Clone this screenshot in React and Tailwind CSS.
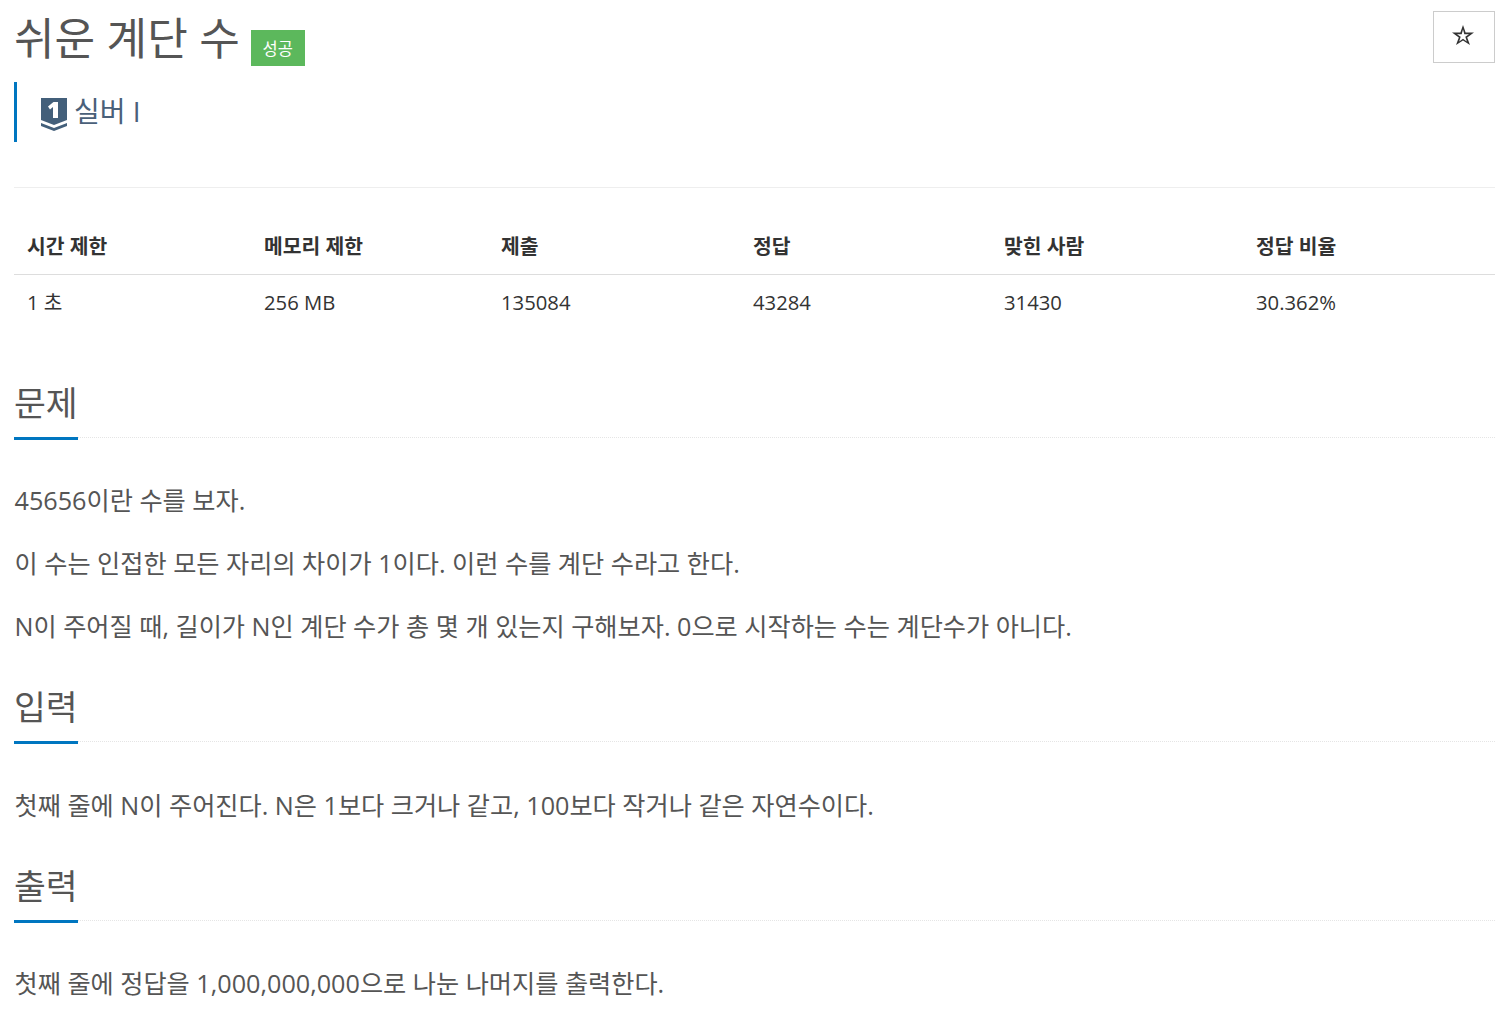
const font = { fontFamily: '"Open Sans", "Noto Sans CJK KR", sans-serif' };

function Section({ title, children }) {
  return (
    <section>
      <div className="border-b border-dotted border-[#e5e5e5] h-[66px] flex">
        <h2 className="h-[68px] border-b-[3px] border-[#0076c0] text-[34.65px] leading-[62px] text-[#555] font-normal">{title}</h2>
      </div>
      <div className="pt-[43px] pb-[32px] pl-[0.5px] text-[#555] text-[25.2px] leading-[38px]">{children}</div>
    </section>
  );
}

export default function App() {
  const headers = ["시간 제한", "메모리 제한", "제출", "정답", "맞힌 사람", "정답 비율"];
  const values = ["1 초", "256 MB", "135084", "43284", "31430", "30.362%"];
  const widths = ["w-[237px]", "w-[237px]", "w-[252px]", "w-[251px]", "w-[252px]", "w-[252px]"];

  return (
    <div className="pl-[14px] pr-[13px] w-[1508px] bg-white" style={font}>
      <div className="flex justify-between items-start h-[82px]">
        <h1 className="flex items-start text-[44.1px] leading-[76px] text-[#555] font-normal">
          쉬운 계단 수
          <span className="ml-[11px] mt-[30px] w-[54px] h-[36px] bg-[#5cb85c] text-white text-[16.5px] leading-[38px] text-center">성공</span>
        </h1>
        <button className="mt-[11px] w-[62px] h-[52px] border border-[#ccc] flex items-center justify-center pb-[4px] pr-[2px]">
          <svg width="22" height="20" viewBox="0 0 22 20">
            <path
              fillRule="evenodd"
              fill="#333"
              d="M11 0l2.6 7.5H22l-6.8 4.9L18 20l-7-4.5L4 20l2.8-7.6L0 7.5h8.4zM11 4.5L9.7 9.2H5l3.7 2.6-1.5 4.8 3.8-2.9 3.8 2.9-1.5-4.8L17 9.2h-4.7z"
            />
          </svg>
        </button>
      </div>

      <div className="h-[60px] border-l-[3px] border-[#0076c0] pl-[24px] flex items-start text-[#4a6079] text-[28px] leading-[58px]">
        <svg width="28" height="35" viewBox="0 0 28 35" className="mt-[15px] mr-[6px] -ml-[1px]">
          <path d="M1 1h26v22L14 28 1 23z" fill="#435f7a" />
          <path d="M1 26l13 5 13-5v3l-13 5-13-5z" fill="#435f7a" />
          <path d="M8 9.5l5.5-4.5H18v16h-5V10l-3 2.5z" fill="#fff" />
        </svg>
        실버 I
      </div>

      <div className="mt-[45px] border-t border-[#eee]">
        <div className="flex h-[87px] items-end border-b border-[#ddd] pb-[13px] text-[20.4px] font-bold text-[#333] leading-[30px]">
          {headers.map((h, i) => (
            <div key={h} className={`${widths[i]} pl-[13px]`}>{h}</div>
          ))}
        </div>
        <div className="flex h-[54px] items-center text-[20.25px] text-[#333] leading-[30px]">
          {values.map((v, i) => (
            <div key={v} className={`${widths[i]} pl-[13px]`}>{v}</div>
          ))}
        </div>
      </div>

      <div className="mt-[43px]">
        <Section title="문제">
          <p className="mb-[25px]">45656이란 수를 보자.</p>
          <p className="mb-[25px]">이 수는 인접한 모든 자리의 차이가 1이다. 이런 수를 계단 수라고 한다.</p>
          <p className="-mb-px">N이 주어질 때, 길이가 N인 계단 수가 총 몇 개 있는지 구해보자. 0으로 시작하는 수는 계단수가 아니다.</p>
        </Section>
        <Section title="입력">
          <p className="mt-px -mb-px">첫째 줄에 N이 주어진다. N은 1보다 크거나 같고, 100보다 작거나 같은 자연수이다.</p>
        </Section>
        <Section title="출력">
          <p>첫째 줄에 정답을 1,000,000,000으로 나눈 나머지를 출력한다.</p>
        </Section>
      </div>
    </div>
  );
}
